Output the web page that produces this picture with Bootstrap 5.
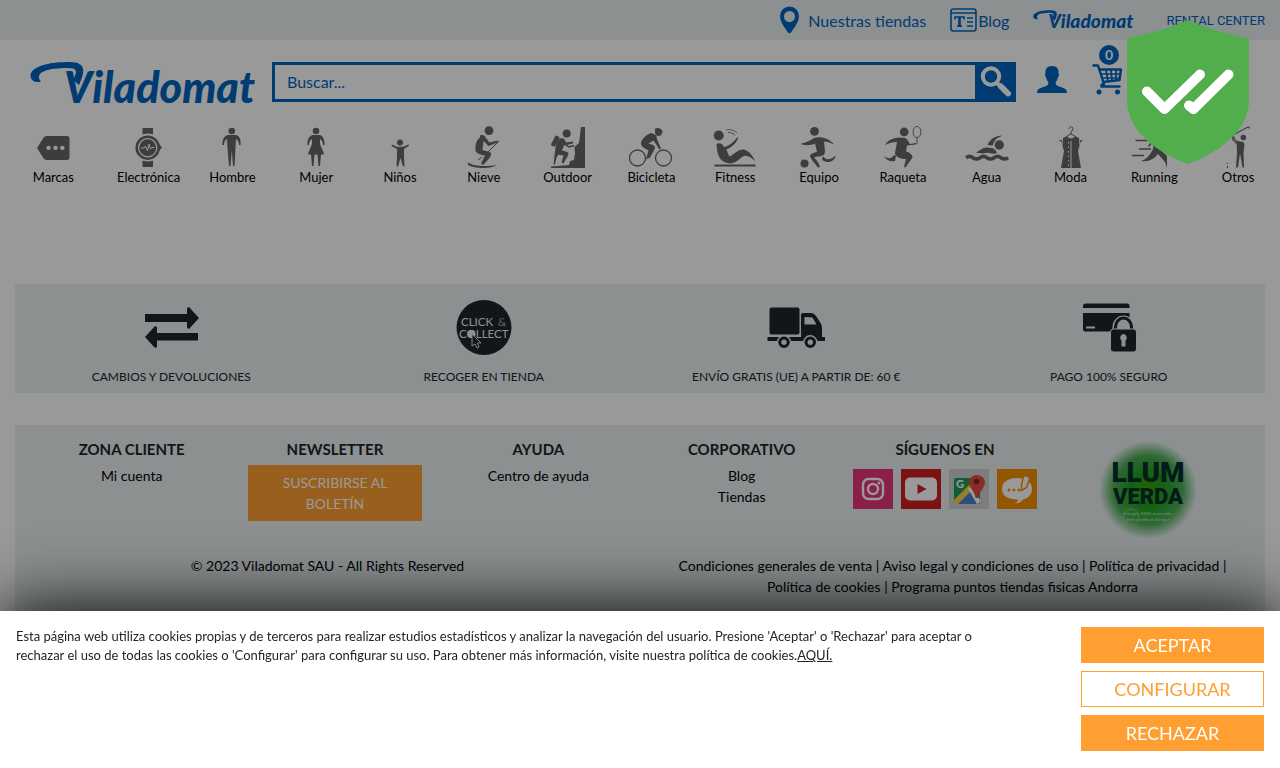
<!DOCTYPE html>
<html lang="es">
<head>
<meta charset="utf-8">
<meta name="viewport" content="width=device-width, initial-scale=1">
<title>Viladomat</title>
<link href="https://cdn.jsdelivr.net/npm/bootstrap@5.3.0/dist/css/bootstrap.min.css" rel="stylesheet">
<style>
:root { --vd-blue: #0064be; --vd-orange: #ff9f32; --vd-tint: #e9f0f0; }
body { font-family: Lato, "Open Sans", sans-serif; font-size: 14px; line-height: 21px; color: #212529; }
a { color: inherit; text-decoration: none; }
svg { display: block; }
.site-top { background: var(--vd-tint); height: 40px; color: var(--vd-blue); font-size: 16px; padding-right: 15px; }
.rental { font-family: Roboto, sans-serif; font-size: 13px; }
.site-head { color: var(--vd-blue); padding: 22px 158px 0 30px; }
.search-box { border: 3px solid var(--vd-blue); height: 40px; }
.search-box input { border: 0; border-radius: 0; background: transparent; font-size: 16px; color: var(--vd-blue); padding: 0 12px; }
.search-box input::placeholder { color: var(--vd-blue); opacity: 1; }
.search-box button { background: var(--vd-blue); border: 0; width: 39px; padding: 0; color: #fff; }
.cart-count { left: 7px; top: -17px; width: 20px; height: 20px; background: var(--vd-blue); color: #fff; font-size: 14px; font-weight: 700; line-height: 20px; }
.cats { font-size: 13px; line-height: 19px; padding-top: 20px; }
.cats svg { width: 44px; height: 42px; color: #666; margin: 0 auto; }
.cats a { color: #000; display: block; }
.band { background: var(--vd-tint); margin: 0 15px; }
.services { margin-top: 97px; padding: 16px 0 7px; font-size: 12px; line-height: 19px; }
.services svg { margin: 0 auto 12px; }
.foot { margin-top: 32px; padding: 14px 0 14px; color: #000; }
.foot h2 { font-size: 15px; line-height: 21px; font-weight: 700; color: #212529; margin: 0 0 5px; }
.foot-cols { padding: 0 15px; min-height: 116px; }
.btn-news { background: var(--vd-orange); color: #fff; border: 0; border-radius: 0; font-size: 14px; line-height: 21px; padding: 7px 12px; margin: 0 15px; }
.overlay { background: rgba(0,0,0,.4); pointer-events: none; z-index: 1040; }
.shield { right: 31px; top: 20px; z-index: 1060; }
.cookies { background: #fff; padding: 16px; min-height: 157px; box-shadow: 0 0 70px #000; z-index: 1050; font-size: 13px; line-height: 19px; }
.cookies p { max-width: 1000px; }
.cookie-acts { width: 183px; flex: none; }
.cookie-acts .btn { border: 1px solid var(--vd-orange); border-radius: 0; font-size: 18px; line-height: 26px; padding: 4px; }
.btn-full { background: var(--vd-orange); color: #fff; }
.btn-line { background: #fff; color: var(--vd-orange); }
</style>
</head>
<body>
<div class="site-top d-flex justify-content-end align-items-center gap-4">
  <a href="#" class="d-flex align-items-center"><svg class="me-2" width="21" height="28" viewBox="0 0 21 28"><path fill="currentColor" fill-rule="evenodd" d="M10.500 0.500a9.500 9.500 0 0 0-9.500 9.500c0 6 5 12 8 16.500q1.500 1.500 3 0C15 22 20 16 20 10A9.500 9.500 0 0 0 10.500.5Zm0 4.500a5.500 5.500 0 1 1 0 11a5.500 5.500 0 0 1 0-11Z"/></svg>Nuestras tiendas</a>
  <a href="#" class="d-flex align-items-center"><svg width="28" height="26" viewBox="0 0 28 26" fill="none" stroke="currentColor" stroke-width="1.600"><rect x="1" y="2" width="25" height="22" rx="2.500"/><path d="M1 6H26M17 11h6M17 15h6M17 19h6M5 12.500V10h9v2.500M9.500 10v9M7 19.200h5"/><path d="M9.500 10v9" stroke-width="2.500"/></svg>Blog</a>
  <a href="#" class="d-flex align-items-center gap-4" aria-label="Viladomat Rental Center"><svg width="101" height="20" viewBox="0 0 226 44" overflow="visible"><path fill="currentColor" d="M11 19.500C3 22-1 16 1 11C5 3 22 0 40 0C57 0 55 11 49 23L43 18C48 9 47 6 38 6C24 6 13 8 10 12C8 15 9 17 11 19.500Z"/><text x="34" y="40.500" font-family="Lato, sans-serif" font-weight="900" font-style="italic" font-size="43" fill="currentColor">Viladomat</text></svg><span class="rental ms-2">RENTAL CENTER</span></a>
</div>

<header class="site-head d-flex align-items-start">
  <a href="#" aria-label="Viladomat"><svg width="226" height="44" viewBox="0 0 226 44" overflow="visible"><path fill="currentColor" d="M11 19.500C3 22-1 16 1 11C5 3 22 0 40 0C57 0 55 11 49 23L43 18C48 9 47 6 38 6C24 6 13 8 10 12C8 15 9 17 11 19.500Z"/><text x="34" y="40.500" font-family="Lato, sans-serif" font-weight="900" font-style="italic" font-size="43" fill="currentColor">Viladomat</text></svg></a>
  <form class="search-box d-flex flex-grow-1 ms-3 me-3">
    <input type="text" class="form-control shadow-none" placeholder="Buscar..." aria-label="Buscar">
    <button type="button" aria-label="Buscar"><svg width="38" height="34" viewBox="0 0 38 34" fill="none" stroke="currentColor" stroke-linecap="round"><circle cx="16" cy="11.500" r="8.200" stroke-width="4"/><path d="M22 18l3 3" stroke-width="4"/><path d="M26 21.500l7 7" stroke-width="6"/></svg></button>
  </form>
  <a href="#" class="ms-1 mt-1" aria-label="Mi cuenta"><svg width="32" height="28" viewBox="0 0 32 28" fill="currentColor"><path d="M16 0c5 0 7 3 6.500 7.500c1 1 .5 3-.5 3.500c-.5 3-2 4.500-2.500 6c0 2 2 3 5 4c4 1.300 6.500 2 6.500 6H1c0-4 2.500-4.700 6.500-6c3-1 5-2 5-4C12 15.500 10.500 14 10 11c-1-.5-1.500-2.500-.5-3.500C9 3 11 0 16 0Z"/></svg></a>
  <a href="#" class="position-relative ms-4" aria-label="Cesta"><svg width="30" height="34" viewBox="0 0 30 34" fill="none" stroke="currentColor" stroke-linecap="round" stroke-linejoin="round"><path stroke-width="2.400" d="M1.500 3.500h4.500L12 22q-3 0-2.500 2.500h18M7.500 7.500H29L27.500 18l-16 2"/><path stroke-width="1.700" d="M9 12h19M11 16h17M14 8l2 11M19 8l1 10.500M24 8v10"/><circle cx="7" cy="30" r="2.500" fill="currentColor" stroke="none"/><circle cx="25.500" cy="30" r="2.500" fill="currentColor" stroke="none"/></svg><span class="cart-count position-absolute rounded-circle text-center">0</span></a>
</header>

<nav class="cats row g-0 text-center" aria-label="Categorías">
  <a href="#" class="col-1"><svg viewBox="0 0 44 42" fill="currentColor"><path fill-rule="evenodd" d="M15 10H36q2.500 0 2.500 2.500V31.500q0 2.500-2.500 2.500H15L13 33L6 22l7-11ZM17.500 19.700a2.200 2.200 0 1 0 .1 0ZM24.500 19.700a2.200 2.200 0 1 0 .1 0ZM31.300 19.700a2.200 2.200 0 1 0 .1 0Z"/></svg>Marcas</a>
  <a href="#" class="col"><svg viewBox="0 0 44 42"><g fill="currentColor"><path d="M15.500 2h10.500v6.500q-5-2-10.500 0ZM15.500 41h10.500v-6.500q-5 2-10.500 0Z"/><path d="M32 18l3 3.500l-3 3.500Z"/><circle cx="20.700" cy="21.700" r="8.500"/></g><circle cx="20.700" cy="21.700" r="11" fill="none" stroke="currentColor" stroke-width="2.500"/><path d="M14 22h3l1.500-2l2 5l1.500-7l1.500 5l1-1.500h3" fill="none" stroke="#fff"/></svg>Electrónica</a>
  <a href="#" class="col"><svg viewBox="0 0 44 42" fill="currentColor"><circle cx="21.800" cy="5" r="3.300"/><path d="M18 9h8c4 1 5 5 4.500 10h-1.500c0-3-1-5-3-6l-.5 9L24.500 40h-1.500L21.800 24L20.500 40H19L17.500 22L17 13c-2 1-3 3-3 6h-1.500C12 14 14 10 18 9Z"/></svg>Hombre</a>
  <a href="#" class="col"><svg viewBox="0 0 44 42" fill="currentColor"><circle cx="22" cy="5" r="3.300"/><path d="M18.500 9h7.500c3 1 5 5 4.500 10h-1.500c0-3-1-5-3-6v5c1 3 3 6 4 10.500h-3L26 40h-1.500l-1-11.500h-3L19.500 40H18L17 28.500h-3c1-4 3-7.500 4-10.500v-5c-2 1-3 3-3 6h-1.500C13 14 15 10 18.500 9Z"/></svg>Mujer</a>
  <a href="#" class="col"><svg viewBox="0 0 44 42" fill="currentColor"><circle cx="22" cy="16.500" r="3"/><path d="M14 18.500l5 2.300h6l5.500-2.300l.5 1.200L26 23v7l.5 10.500H25L22.500 32L20 40.500h-1.500L19 30v-7l-5.500-3Z"/></svg>Niños</a>
  <a href="#" class="col"><svg viewBox="0 0 44 42" fill="currentColor"><circle cx="27" cy="4.700" r="4.400"/><path d="M18 9.500c3-1 5 0 5.500 2l4 5l8-2v2l-9 3.500l-5-5l-1 9c3 1 7 1.500 8.500 3c1 3-3 7-8 12l-2-1.500l4-8c-4-.5-9-2-9.500-5c-.5-6 1-11 4.500-13Z"/><path d="M37 15L26 26M20 31l-4 3" fill="none" stroke="currentColor" stroke-width="1"/><path d="M6 36.500c4 2.500 9 3.500 17 3.500q7 0 12-1q-5 3-13 3C14 42 8 40.500 6 39Z"/></svg>Nieve</a>
  <a href="#" class="col"><svg viewBox="0 0 44 42" fill="currentColor"><circle cx="20.700" cy="7.500" r="4"/><path d="M35 1h4v41H5v-1.500l18-1.500l1-4l4-1l1-7l-.5-6l4.500-4Z"/><rect x="7" y="9.500" width="4.500" height="11" rx="1" transform="rotate(28 9 15)"/><path d="M14 12.500c3-1 5 0 6 4l7-1v2l-9 2l-2 5c3 1 6 1 6.500 3c0 2-3 6-5 10l-2-1l2-7c-3-.5-4-.5-5-1l-2 3L9 38.500H7.500L9 25c1-5 1-10 5-12.500Z"/><path d="M20 19l3 2l5-1.500" fill="none" stroke="currentColor" stroke-width="1.600"/></svg>Outdoor</a>
  <a href="#" class="col"><svg viewBox="0 0 44 42" fill="currentColor"><g fill="none" stroke="currentColor" stroke-width="1.300"><circle cx="8.500" cy="32" r="8"/><circle cx="34.500" cy="32" r="8"/></g><path d="M26 2.500c3-1.500 7 0 7.500 3l-1.500 4l-4 .5l-2-3Z"/><path d="M22 7l5 2l1 4l4 9.500l-1.500 1l-6-9l-5 3c4 1 7 2 6.500 5l-5 9l-4 2l2.500-9c-3-2-8-4-7.500-7C12.500 13 17 9 22 7Z"/></svg>Bicicleta</a>
  <a href="#" class="col"><svg viewBox="0 0 44 42" fill="currentColor"><circle cx="5.700" cy="9.500" r="5"/><path d="M3.500 18c3-2 6 0 7.500 3c5-1 10-5 13.500-10l.8.5c-2 6-7 10-12 12l3 7c5-2 8-7 14-7c6 1 9 6 12 11.500c-4-3-8-6-11-5c-4 1-7 7-14 7.500C8 37 4 31 3.500 18Z"/><rect x="1.500" y="38.500" width="41" height="2"/><path d="M13 4c4-1 8 0 11 3M15 6.500c3 0 5 1 7 3" fill="none" stroke="currentColor" stroke-width=".8"/></svg>Fitness</a>
  <a href="#" class="col"><svg viewBox="0 0 44 42" fill="currentColor"><circle cx="17.500" cy="5.300" r="4.400"/><circle cx="7.500" cy="37.500" r="4"/><path d="M17 12c6-2 15 0 20 6.500c-4-2-7-3-10-3l1 10q0 5-8 5l-3 1c3 3 5 6 6 9.500l-2 .5c-3-4-8-9-8-12c1-2 5-3 7-4l-2-8c-4 2-8 2-13.500 1v-1c5-1 9-3 12.500-5.500Z"/><path d="M26 30c3 5 8 4 13-.5c-2 6-8 9-14 4Z"/></svg>Equipo</a>
  <a href="#" class="col"><svg viewBox="0 0 44 42" fill="currentColor"><circle cx="23.200" cy="6" r="4.400"/><path d="M24 12c3 1 4 5 5 6l6-1v1.500l-9 1l-1 6c4 1 7 4 6.500 6l-7 10l-1.500-.5l2-8c-5 0-11-2-11-6l2-11c-4 0-8 1-12 3c3-6 12-9 20-7Z"/><path d="M15 30l-1 5c-5 1-9-1-11-5c5 4 8 2 10-1Z"/><g fill="none" stroke="currentColor" stroke-width=".9"><ellipse cx="36" cy="6" rx="4" ry="5.500"/><path d="M36 11.500V18"/></g></svg>Raqueta</a>
  <a href="#" class="col"><svg viewBox="0 0 44 42" fill="currentColor"><circle cx="34.300" cy="19" r="4.700"/><path d="M22.500 19C25 13 31 9.500 36.700 9.500q0 1-3 2c-3 1-5 4-6 8ZM11 27c7-6 11-6 15-5c3 0 5 2 6 5c-5 2-8-1-11 0c-3 1-6 0-10 0Z"/><path d="M1 31.700q3.500-2.500 7 0t7 0t7 0t7 0t7 0t7 0" fill="none" stroke="currentColor" stroke-width="3.600"/></svg>Agua</a>
  <a href="#" class="col"><svg viewBox="0 0 44 42" fill="currentColor"><path d="M18 10q4 5 8 0l4 2l.5 8l-1.500 5l3 17H12l3-17l-1.500-5l.5-8Z"/><path d="M22 15v27" stroke="#fff" fill="none"/><path d="M19.500 16v26" stroke="#fff" stroke-dasharray="1.500 3" fill="none"/><g fill="none" stroke="currentColor"><path d="M20 3c0-3 4-3 4 0q0 2-2 2.500v3M18 10l4-2l4 2M10.500 14.500h2v2M33.500 14.500h-2v2"/></g></svg>Moda</a>
  <a href="#" class="col"><svg viewBox="0 0 44 42" fill="currentColor"><circle cx="31" cy="5" r="4"/><path d="M22 11h9l4 6l5-1v2l-7 1l-3-2v8l5 5v12l-2-6l-7-8c-4 5-9 8-17 7c6-2 9-6 12-12l1-8l-5 6l-1-1Z"/><path d="M3.500 14.500H16M7 23h12M0 29.500h12" fill="none" stroke="currentColor" stroke-width="1.300"/></svg>Running</a>
  <a href="#" class="col"><svg viewBox="0 0 44 42" fill="currentColor"><circle cx="27.300" cy="11.500" r="2.800"/><path d="M20.500 15l7 1l1 3l-1 8l.5 14.500h-1.500l-2.500-14l-2 14h-2l1-15Z"/><path d="M24 17l-5-3l-2-5L31 1.500q3-1 2 1M17 8c-2 5 1 9 6 10M11.500 37v1M11.500 40v2" fill="none" stroke="currentColor" stroke-width="1.100"/></svg>Otros</a>
</nav>

<section class="band services row g-0 text-center">
  <div class="col-3"><svg width="60" height="55" viewBox="0 0 60 55" fill="currentColor"><path d="M4 14h42V8l2-1l10 11l-10 11l-2-1v-6H4ZM57 33H16v-6l-2-1L4 37l10 11l2-1v-6.500h41Z"/></svg>CAMBIOS Y DEVOLUCIONES</div>
  <div class="col-3"><svg width="60" height="55" viewBox="0 0 60 55"><circle cx="30" cy="27.500" r="27.500" fill="currentColor"/><g fill="#e9f0f0" font-family="Lato, sans-serif" font-weight="400" font-size="11.500"><text x="7" y="26">CLICK</text><text x="44" y="26" font-weight="300">&amp;</text><text x="5" y="38">COLLECT</text></g><circle cx="17.500" cy="34" r="4" fill="#e9f0f0"/><path d="M18 34v12l3-2l2 4l2-1l-1.500-4h3.500Z" fill="#212529" stroke="#e9f0f0" stroke-width=".9"/></svg>RECOGER EN TIENDA</div>
  <div class="col-3"><svg width="60" height="55" viewBox="0 0 60 55" fill="currentColor"><rect x="3.500" y="7.500" width="30" height="27" rx="2"/><path fill-rule="evenodd" d="M35 15q0-2 2-2h8q3 0 5 3l4 6q2 3 2 6v9h3v4H1.500v-4H35ZM38.500 17v7.500h12l-4-7Z"/><g stroke="#e9f0f0" stroke-width="1.500"><circle cx="18" cy="42.300" r="6.500"/><circle cx="44.300" cy="42.300" r="6.500"/></g><g fill="#e9f0f0"><circle cx="18" cy="42.300" r="2.700"/><circle cx="44.300" cy="42.300" r="2.700"/></g></svg>ENVÍO GRATIS (UE) A PARTIR DE: 60 €</div>
  <div class="col-3"><svg width="60" height="55" viewBox="0 0 60 55"><g fill="currentColor"><path d="M4 8V6q0-2.500 2.500-2.500H48q2.500 0 2.500 2.500v2ZM4 13H50.500V31.500H6.500Q4 31.500 4 29Z"/></g><rect x="7" y="26.500" width="9" height="2" fill="#e9f0f0"/><path d="M36 31v-4a8.500 9 0 0 1 17 0v4" fill="#e9f0f0" stroke="#e9f0f0" stroke-width="5"/><path d="M36.500 30v-3a8 9 0 0 1 16 0v3" fill="none" stroke="currentColor" stroke-width="3"/><rect x="31.500" y="29" width="26" height="23" rx="3" fill="currentColor" stroke="#e9f0f0"/><path d="M44.500 34a3.700 3.700 0 0 0-2 6.500v6h4v-6a3.700 3.700 0 0 0-2-6.500Z" fill="#e9f0f0"/></svg>PAGO 100% SEGURO</div>
</section>

<footer class="band foot text-center">
  <div class="foot-cols row g-0 align-items-start">
    <div class="col-2"><h2>ZONA CLIENTE</h2><a href="#">Mi cuenta</a></div>
    <div class="col-2 d-grid"><h2>NEWSLETTER</h2><button type="button" class="btn btn-news">SUSCRIBIRSE AL<br>BOLETÍN</button></div>
    <div class="col-2"><h2>AYUDA</h2><a href="#">Centro de ayuda</a></div>
    <div class="col-2"><h2>CORPORATIVO</h2><a href="#">Blog</a><br><a href="#">Tiendas</a></div>
    <div class="col-2"><h2>SÍGUENOS EN</h2>
      <div class="d-flex justify-content-center gap-2 pt-1">
        <a href="#" aria-label="Instagram"><svg width="40" height="40" viewBox="0 0 40 40"><path fill="#e8357f" d="M0 0h40v40H0z"/><g fill="none" stroke="#fff" stroke-width="2.400"><rect x="10" y="10" width="20" height="20" rx="5.500"/><circle cx="20" cy="20" r="5"/></g><circle cx="26" cy="14" r="1.500" fill="#fff"/></svg></a>
        <a href="#" aria-label="YouTube"><svg width="40" height="40" viewBox="0 0 40 40"><path fill="#cd201f" d="M0 0h40v40H0z"/><rect x="4" y="8.500" width="32" height="23" rx="5" fill="#fff"/><path d="M16.500 15v10l9-5z" fill="#cd201f"/></svg></a>
        <a href="#" aria-label="Google Maps"><svg width="40" height="40" viewBox="0 0 40 40"><path fill="#cfd0d2" d="M0 0h40v40H0z"/><rect x="5" y="9" width="26" height="26" rx="2" fill="#1f9d58"/><path d="M18 22L31 35H8z" fill="#4a80d8"/><path d="M5 31L22 14l4 4L9 35H5z" fill="#ffd34f"/><path d="M19 20l4-3l8 14q0 4-3 4z" fill="#fff"/><path d="M27 6a8 8 0 0 0-7 8c0 5 6 8 6.500 15h3C30 22 36 19 36 13a8 8 0 0 0-9-7Z" fill="#e54b40"/><circle cx="27.500" cy="12.500" r="2.800" fill="#7c2a26"/><text x="7" y="19" font-size="11" font-weight="900" font-family="Lato, sans-serif" fill="#fff">G</text></svg></a>
        <a href="#" aria-label="Blog de opinión"><svg width="40" height="40" viewBox="0 0 40 40"><path fill="#f39200" d="M0 0h40v40H0z"/><path d="M20 9c9 0 15 4 15 11c0 5-3 9-9 10.500c-1 2-4 4-8 4q3-2 3-4C11 30.500 5 27 5 20C5 13 11 9 20 9Z" fill="#fff"/><path d="M27 6l6 2.500l-3.500 10l-5 3v-6Z" fill="#fff" stroke="#f39200" stroke-width="1.500"/><g fill="#f39200"><circle cx="12" cy="21" r="1.500"/><circle cx="17" cy="21" r="1.500"/><circle cx="22" cy="21" r="1.500"/></g></svg></a>
      </div>
    </div>
    <div class="col-2"><svg class="mx-auto" width="100" height="100" viewBox="0 0 100 100"><defs><radialGradient id="leaf"><stop offset="0" stop-color="#3ba800"/><stop offset=".35" stop-color="#1fa322"/><stop offset=".7" stop-color="#4fae58"/><stop offset="1" stop-color="#e9f0f0"/></radialGradient></defs><circle cx="50" cy="51" r="49" fill="url(#leaf)"/><g fill="#062f2c" font-family="Roboto, sans-serif" font-weight="900"><text x="50" y="43" font-size="28" text-anchor="middle">LLUM</text><text x="50" y="65" font-size="22" text-anchor="middle">VERDA</text></g><g fill="#c8e8c8" font-family="Lato, sans-serif" font-size="4.500" text-anchor="middle"><text x="50" y="76">Energia 100% renovable</text><text x="50" y="82">amb certificat d’origen</text></g><circle cx="33" cy="78" r="8" fill="none" stroke="#9ed69e" stroke-width=".7"/></svg></div>
  </div>
  <div class="row g-0">
    <div class="col-6">© 2023 Viladomat SAU - All Rights Reserved</div>
    <div class="col-6 px-3"><a href="#">Condiciones generales de venta</a> | <a href="#">Aviso legal y condiciones de uso</a> | <a href="#">Política de privacidad</a> | <a href="#">Política de cookies</a> | <a href="#">Programa puntos tiendas fisicas Andorra</a></div>
  </div>
</footer>

<div class="overlay position-fixed top-0 start-0 w-100 h-100"></div>

<svg class="shield position-fixed" width="122" height="144" viewBox="0 0 122 144" role="img" aria-label="Sitio verificado"><path fill="#52ae4c" d="M61 0Q91 13 122 18V80C122 108 98 130 61 144C24 130 0 108 0 80V18Q31 13 61 0Z"/><path d="M20 71.500L37.500 89L73 54.500M62 85.500L66.500 89L101.500 54.500" fill="none" stroke="#fff" stroke-width="10" stroke-linecap="round" stroke-linejoin="round"/></svg>

<section class="cookies position-fixed bottom-0 start-0 w-100 d-flex justify-content-between" aria-label="Cookies">
  <p class="mb-0">Esta página web utiliza cookies propias y de terceros para realizar estudios estadísticos y analizar la navegación del usuario. Presione 'Aceptar' o 'Rechazar' para aceptar o rechazar el uso de todas las cookies o 'Configurar' para configurar su uso. Para obtener más información, visite nuestra política de cookies.<a href="#" class="text-decoration-underline">AQUÍ.</a></p>
  <div class="cookie-acts d-grid gap-2 align-content-start">
    <button type="button" class="btn btn-full">ACEPTAR</button>
    <button type="button" class="btn btn-line">CONFIGURAR</button>
    <button type="button" class="btn btn-full">RECHAZAR</button>
  </div>
</section>
<script src="https://cdn.jsdelivr.net/npm/bootstrap@5.3.0/dist/js/bootstrap.bundle.min.js"></script>
</body>
</html>
